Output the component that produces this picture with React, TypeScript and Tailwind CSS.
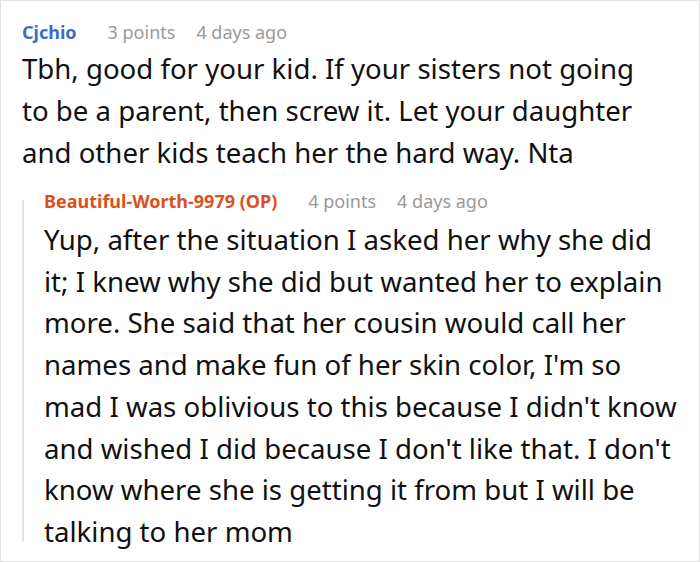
import React from "react";

const font = { fontFamily: '"Noto Sans", "Open Sans", sans-serif' };

function Meta({ name, color, points, time }: { name: string; color: string; points: string; time: string }) {
  return (
    <div className="flex items-center h-[22px] text-[18px] leading-[22px] whitespace-nowrap">
      <span className={`font-bold ${color}`}>{name}</span>
      <span className="ml-[31px] text-[#999999]">{points}</span>
      <span className="ml-[21px] text-[#999999]">{time}</span>
    </div>
  );
}

export default function App() {
  const c1 = [
    "Tbh, good for your kid. If your sisters not going",
    "to be a parent, then screw it. Let your daughter",
    "and other kids teach her the hard way. Nta",
  ];
  const c2 = [
    "Yup, after the situation I asked her why she did",
    "it; I knew why she did but wanted her to explain",
    "more. She said that her cousin would call her",
    "names and make fun of her skin color, I'm so",
    "mad I was oblivious to this because I didn't know",
    "and wished I did because I don't like that. I don't",
    "know where she is getting it from but I will be",
    "talking to her mom",
  ];
  return (
    <div className="w-[700px] h-[562px] bg-white border border-[#e2e2e2] text-[#111111] overflow-hidden" style={font}>
      <div className="pl-[21px] pt-[20px]">
        <Meta name="Cjchio" color="text-[#3c6ec1]" points="3 points" time="4 days ago" />
        <div className="mt-[4px] text-[27.6px] leading-[42px]">
          {c1.map((l, i) => (
            <div key={i} className="whitespace-nowrap">{l}</div>
          ))}
        </div>
        <div className="mt-[17px] flex">
          <div className="w-[2px] bg-[#e4e4e4] mt-[10px] mb-[12px]" />
          <div className="pl-[20px]">
            <Meta name="Beautiful-Worth-9979 (OP)" color="text-[#d95120]" points="4 points" time="4 days ago" />
            <div className="mt-[7px] text-[27.6px] leading-[41.7px]">
              {c2.map((l, i) => (
                <div key={i} className="whitespace-nowrap">{l}</div>
              ))}
            </div>
          </div>
        </div>
      </div>
    </div>
  );
}
